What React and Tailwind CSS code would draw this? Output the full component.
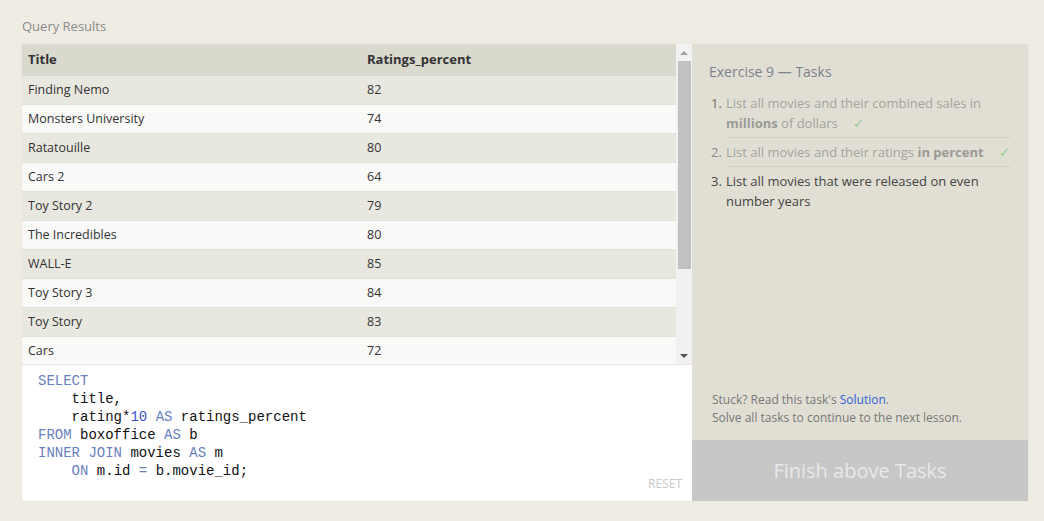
import React from "react";

const ROWS = [
  ["Finding Nemo", 82],
  ["Monsters University", 74],
  ["Ratatouille", 80],
  ["Cars 2", 64],
  ["Toy Story 2", 79],
  ["The Incredibles", 80],
  ["WALL-E", 85],
  ["Toy Story 3", 84],
  ["Toy Story", 83],
  ["Cars", 72],
];

const K = "text-[#6a7fbf]";

function Check() {
  return <span className="ml-3 text-[#8fcf8f]">✓</span>;
}

export default function App() {
  return (
    <div
      className="min-h-[521px] w-[1044px] bg-[#efece4] px-[22px] pt-[17px]"
      style={{ fontFamily: '"Open Sans", "Noto Sans", sans-serif' }}
    >
      <div className="text-[13px] leading-[18px] text-[#8a8a8a]">Query Results</div>

      <div className="mt-[9px] flex h-[457px] w-[1006px] shadow-[0_0_1px_rgba(0,0,0,0.12)]">
        {/* left: results + editor */}
        <div className="flex w-[670px] flex-col">
          <div className="flex h-[320px] bg-[#f1f1f1]">
            <div className="flex-1 overflow-hidden">
              <div className="flex h-[32px] items-center bg-[#dad9ce] text-[13px] font-bold text-[#333]">
                <div className="w-[339px] pl-[6px]">Title</div>
                <div className="pl-[6px]">Ratings_percent</div>
              </div>
              {ROWS.map(([t, r], i) => (
                <div
                  key={t}
                  className={[
                    "flex h-[29px] items-center border-b border-[#e2e1da] text-[12.5px] text-[#333]",
                    i % 2 === 0 ? "bg-[#e9e8e0]" : "bg-[#f9f9f8]",
                  ].join(" ")}
                >
                  <div className="w-[339px] pl-[6px]">{t}</div>
                  <div className="pl-[6px]">{r}</div>
                </div>
              ))}
            </div>
            {/* scrollbar */}
            <div className="flex w-[16px] flex-col items-center bg-[#f1f1f1]">
              <div className="flex h-[17px] items-center justify-center">
                <div className="h-0 w-0 border-x-[4px] border-b-[4px] border-x-transparent border-b-[#a3a3a3]" />
              </div>
              <div className="h-[208px] w-[13px] bg-[#c1c1c1]" />
              <div className="flex-1" />
              <div className="flex h-[17px] items-center justify-center">
                <div className="h-0 w-0 border-x-[4px] border-t-[4px] border-x-transparent border-t-[#505050]" />
              </div>
            </div>
          </div>

          <div className="relative flex-1 border-t border-[#e6e4dc] bg-white pl-[16px] pt-[7px]">
            <div
              className="whitespace-pre text-[14px] leading-[18px] text-[#111]"
              style={{ fontFamily: '"Liberation Mono", "DejaVu Sans Mono", monospace' }}
            >
              <div className={K}>SELECT</div>
              <div>{"    title,"}</div>
              <div>
                {"    rating*"}
                <span className="text-[#3b4fd6]">10</span> <span className={K}>AS</span> ratings_percent
              </div>
              <div>
                <span className={K}>FROM</span> boxoffice <span className={K}>AS</span> b
              </div>
              <div>
                <span className={K}>INNER JOIN</span> movies <span className={K}>AS</span> m
              </div>
              <div>
                {"    "}
                <span className={K}>ON</span> m.id <span className={K}>=</span> b.movie_id;
              </div>
            </div>
            <div className="absolute bottom-[8px] right-[10px] text-[12px] text-[#c8c8c8]">RESET</div>
          </div>
        </div>

        {/* right: tasks */}
        <div className="flex w-[336px] flex-col bg-[#e1dfd4]">
          <div className="flex-1 px-[17px] pt-[18px]">
            <div className="text-[14px] leading-[20px] text-[#7d7f8c]">Exercise 9 — Tasks</div>
            <ol className="mt-[11px] text-[13px] leading-[20px]">
              <li className="flex">
                <span className="w-[17px] shrink-0 pl-[2px] text-[#7a6a4a]">1.</span>
                <span className="flex-1 border-b border-[#d3d1c6] pb-[4px] text-[#a3a39e]">
                  List all movies and their combined sales in{" "}
                  <b className="text-[#9a9a96]">millions</b> of dollars <Check />
                </span>
              </li>
              <li className="mt-[4px] flex">
                <span className="w-[17px] shrink-0 pl-[2px] text-[#8a8a86]">2.</span>
                <span className="flex-1 border-b border-[#d3d1c6] pb-[4px] text-[#a3a39e]">
                  List all movies and their ratings{" "}
                  <b className="text-[#9a9a96]">in percent</b> <Check />
                </span>
              </li>
              <li className="mt-[4px] flex">
                <span className="w-[17px] shrink-0 pl-[2px] text-[#444]">3.</span>
                <span className="flex-1 text-[#444]">
                  List all movies that were released on even number years
                </span>
              </li>
            </ol>
          </div>
          <div className="px-[20px] pb-[13px] text-[12px] leading-[18px] text-[#777]">
            <div>
              Stuck? Read this task's <span className="text-[#2d62d6]">Solution</span>.
            </div>
            <div>Solve all tasks to continue to the next lesson.</div>
          </div>
          <div className="flex h-[61px] items-center justify-center bg-[#c7c7c7] text-[20px] text-[#e9e9e9]">
            Finish above Tasks
          </div>
        </div>
      </div>
    </div>
  );
}
